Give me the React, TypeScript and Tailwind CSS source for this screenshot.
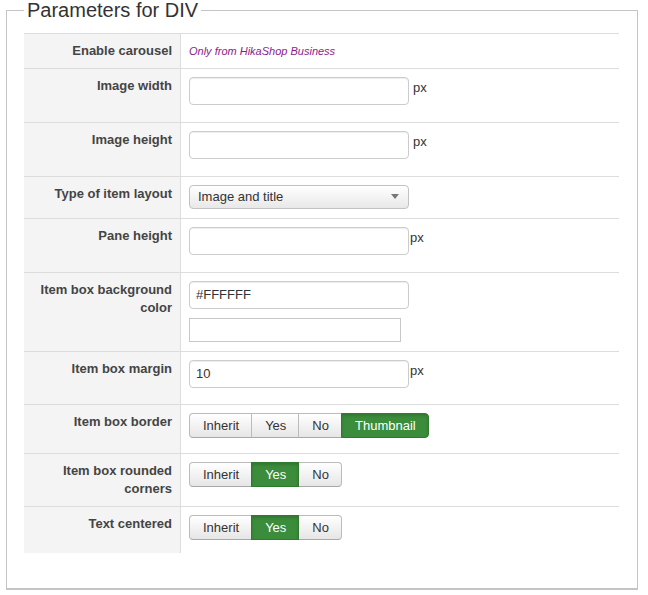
import React from "react";

const font = { fontFamily: '"Liberation Sans", Arial, Helvetica, sans-serif' };

function Label({ children }: { children: React.ReactNode }) {
  return (
    <div className="w-[157px] shrink-0 bg-[#f4f4f4] border-r border-[#dddddd] px-2 py-2 text-right text-[13px] leading-[18px] font-bold text-[#444444]">
      {children}
    </div>
  );
}

function Row({ label, children }: { label: React.ReactNode; children: React.ReactNode }) {
  return (
    <div className="flex border-t border-[#dddddd]">
      <Label>{label}</Label>
      <div className="flex-1 px-2 py-2">{children}</div>
    </div>
  );
}

function TextInput({ value = "", px = false, gap = true, mb = "mb-[9px]" }: { value?: string; px?: boolean; gap?: boolean; mb?: string }) {
  return (
    <div className="flex items-start">
      <div className={`w-[220px] h-[28px] ${mb} border border-[#cccccc] rounded-[4px] bg-white px-[6px] flex items-center text-[13px] text-[#333333] shadow-[inset_0_1px_1px_rgba(0,0,0,0.075)]`}>
        {value}
      </div>
      {px && (
        <span className={`${gap ? "ml-[4px]" : "ml-[1px]"} text-[13px] leading-[18px] mt-[2px] text-[#333333]`}>px</span>
      )}
    </div>
  );
}

function BtnGroup({ items, active, mb }: { items: string[]; active: string; mb: string }) {
  return (
    <div className={`flex ${mb}`}>
      {items.map((it, i) => {
        const isActive = it === active;
        const first = i === 0;
        const last = i === items.length - 1;
        return (
          <div
            key={it}
            className={[
              "h-[25px] pl-[13px] pr-[12px] flex items-center text-[13px] border",
              first ? "rounded-l-[4px]" : "-ml-px",
              last ? "rounded-r-[4px]" : "",
              isActive
                ? "bg-[#3b8c3b] border-[#2f7a2f] text-white shadow-[inset_0_2px_3px_rgba(0,0,0,0.15)] relative"
                : "bg-gradient-to-b from-white to-[#e6e6e6] border-[#bbbbbb] border-b-[#a8a8a8] text-[#333333]",
            ].join(" ")}
          >
            {it}
          </div>
        );
      })}
    </div>
  );
}

export default function App() {
  return (
    <div className="w-[648px] h-[595px] bg-white" style={font}>
      <fieldset className="ml-[6px] mr-[10px] border border-[#c4c4c4] border-b-2 pl-[17px] pr-[18px] pt-[13px] h-[590px]">
        <legend className="px-[3px] text-[20px] leading-[20px] text-[#333333]">Parameters for DIV</legend>
        <div className="w-[595px]">
          <Row label="Enable carousel">
            <div className="text-[11px] leading-[18px] italic text-[#8b1a8b]">Only from HikaShop Business</div>
          </Row>
          <Row label="Image width">
            <TextInput px />
          </Row>
          <Row label="Image height">
            <TextInput px />
          </Row>
          <Row label="Type of item layout">
            <div className="w-[220px] h-[24px] mb-[1px] border border-[#c2c2c2] rounded-[4px] bg-gradient-to-b from-white to-[#e8e8e8] px-[8px] flex items-center justify-between text-[13px] text-[#333333]">
              <span>Image and title</span>
              <svg width="8" height="6" viewBox="0 0 8 6" className="mr-[1px]">
                <path d="M0 0 L8 0 L4 5 Z" fill="#777777" />
              </svg>
            </div>
          </Row>
          <Row label="Pane height">
            <TextInput px gap={false} />
          </Row>
          <Row label={<>Item box background<br />color</>}>
            <TextInput value="#FFFFFF" />
            <div className="w-[212px] h-[24px] mb-[1px] border border-[#c8c8c8] bg-white" />
          </Row>
          <Row label="Item box margin">
            <TextInput value="10" px gap={false} mb="mb-[8px]" />
          </Row>
          <Row label="Item box border">
            <BtnGroup items={["Inherit", "Yes", "No", "Thumbnail"]} active="Thumbnail" mb="mb-[7px]" />
          </Row>
          <Row label={<>Item box rounded<br />corners</>}>
            <BtnGroup items={["Inherit", "Yes", "No"]} active="Yes" mb="" />
          </Row>
          <Row label="Text centered">
            <BtnGroup items={["Inherit", "Yes", "No"]} active="Yes" mb="mb-[5px]" />
          </Row>
        </div>
      </fieldset>
    </div>
  );
}
